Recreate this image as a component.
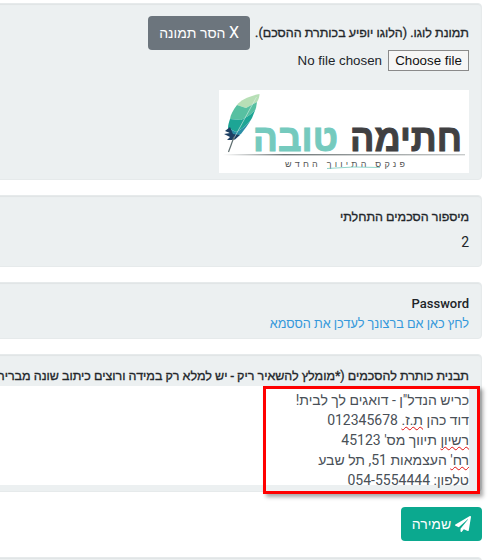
<div class="page" dir="rtl">
  <section class="card logo-card">
    <div class="logo-row">
      <span class="label">תמונת לוגו. (הלוגו יופיע בכותרת ההסכם).</span>
      <button class="remove-btn" type="button"><span class="x">X</span> הסר תמונה</button>
    </div>
    <div class="file">
      <button class="file-btn" type="button">Choose file</button>
      <span class="file-name">No file chosen</span>
    </div>
    <svg class="logo" width="250" height="83" viewBox="0 0 250 83">
      <rect width="250" height="83" fill="#fff" />
      <!-- feather -->
      <path d="M40.5 4 C30 6 22 10 18 15 L27 18 L38 12 C40 9 40.5 6 40.5 4Z" fill="#b7dfb6" />
      <path d="M18 15 C14 20 11.5 25 11 29 L22 30 C28 27 35 23 37 18 L38 12 L27 18Z" fill="#57c0a1" />
      <path d="M11 29 C10 32 9 35 9 38 L17 42 C24 39 30 33 33 28 L37 18 C35 23 28 27 22 30Z" fill="#1da595" />
      <path d="M9 38 C9 40 10 42 11 44 L15 48 L22 44 C25 40 29 35 33 28 C30 33 24 39 17 42Z" fill="#2b8fa6" />
      <path d="M11 37 L6 41 L11 43 L5 44 L11 47 L8 50 L13 50 L16 49.5 L21 45 L14 44Z" fill="#1d3f63" />
      <path d="M37.5 7 L14 50" stroke="#d8efe4" stroke-width="0.6" fill="none" />
      <path d="M15 47 L9.5 62" stroke="#5f6e70" stroke-width="1.2" fill="none" />
      <text class="logo-big" x="243" y="61" fill="#404042" stroke="#404042" textLength="112" lengthAdjust="spacingAndGlyphs">חתימה</text>
      <text class="logo-big" x="119" y="61" fill="#75cabe" stroke="#75cabe" textLength="85" lengthAdjust="spacingAndGlyphs">טובה</text>
      <defs>
        <linearGradient id="rule">
          <stop offset="0" stop-color="#fff" />
          <stop offset="0.25" stop-color="#6f7778" />
          <stop offset="1" stop-color="#c9cccc" />
        </linearGradient>
      </defs>
      <rect x="4" y="64" width="242" height="1.4" fill="url(#rule)" />
      <text class="logo-small" x="186" y="77" fill="#555" textLength="120">פנקס התיווך החדש</text>
      <path d="M108 78.5 Q135 76 161 77.5" stroke="#75cabe" stroke-width="0.8" fill="none" />
    </svg>
  </section>

  <section class="card number-card">
    <div class="label spaced">מיספור הסכמים התחלתי</div>
    <div class="value">2</div>
  </section>

  <section class="card password-card">
    <div class="label latin">Password</div>
    <a class="link" href="#password">לחץ כאן אם ברצונך לעדכן את הססמא</a>
  </section>

  <section class="card template-card">
    <div class="label nowrap">תבנית כותרת להסכמים (*מומלץ להשאיר ריק - יש למלא רק במידה ורוצים כיתוב שונה מברירת המחדל)</div>
    <div class="editor">
      <div>כריש הנדל"ן - דואגים לך לבית!</div>
      <div>דוד כהן <span class="typo">ת.ז.</span> 012345678</div>
      <div><span class="typo">רשיון</span> תיווך מס' 45123</div>
      <div><span class="typo">רח'</span> העצמאות 51, תל שבע</div>
      <div>טלפון: 054-5554444</div>
    </div>
  </section>

  <div class="actions">
    <button class="save-btn" type="button">
      <svg width="16" height="16" viewBox="0 0 512 512"><path fill="currentColor" d="M476 3.2L12.5 270.6c-18.1 10.4-15.8 35.6 2.2 43.2L121 358.4l287.3-253.2c5.5-4.9 13.3 2.6 8.6 8.3L176 407v80.5c0 23.6 28.5 32.9 42.5 15.8L282 426l124.6 52.2c14.2 6 30.4-2.9 33-18.2l72-432C515 7.8 493.3-6.8 476 3.2z" /></svg>
      שמירה
    </button>
  </div>

  <section class="card"></section>

  <div class="callout"></div>
</div>

<style>
  :global(body) {
    margin: 0;
    background: #fff;
  }

  .page {
    position: relative;
    width: 496px;
    height: 560px;
    overflow: hidden;
    box-sizing: border-box;
    padding: 3px 14px 0 0;
    font-family: Roboto, "Liberation Sans", Arial, sans-serif;
    font-size: 14px;
    line-height: 20px;
    color: #212529;
  }

  .card {
    margin: 0 0 15px -20px;
    padding: 11px 12px 6px;
    background: #ecf0f1;
    border: 1px solid #e6eaeb;
    border-radius: 4px;
    box-shadow: inset 0 1px 1px rgba(0, 0, 0, 0.05);
  }

  .logo-card {
    padding-top: 12px;
  }

  .label {
    display: block;
    font-size: 12.5px;
    font-weight: 400;
    -webkit-text-stroke: 0.3px #212529;
    color: #212529;
  }

  .latin {
    font-size: 13px;
    font-weight: 500;
    -webkit-text-stroke: 0;
  }

  .spaced {
    margin: 0 0 5px;
  }

  .nowrap {
    white-space: nowrap;
  }

  .logo-row {
    display: flex;
    align-items: center;
    gap: 5px;
  }

  .remove-btn {
    height: 34px;
    width: 102px;
    padding: 0;
    border: none;
    border-radius: 4px;
    background: #6c757d;
    color: #fff;
    font: inherit;
  }

  .x {
    font-size: 16px;
  }

  .file {
    display: flex;
    align-items: center;
    gap: 6px;
    margin: 0 0 19px;
    font-family: "Liberation Sans", sans-serif;
    font-size: 13.33px;
  }

  .file-btn {
    width: 81px;
    height: 21px;
    padding: 0;
    border: 1px solid #8a8a8a;
    background: #f6f6f6;
    color: #111;
    font: inherit;
  }

  .logo {
    display: block;
  }

  .logo-big {
    font-family: "Liberation Sans", sans-serif;
    font-weight: 700;
    font-size: 38px;
    stroke-width: 1;
    direction: rtl;
  }

  .logo-small {
    font-family: "Liberation Sans", sans-serif;
    font-size: 9px;
    direction: rtl;
  }

  .link {
    display: block;
    font-size: 12.7px;
    line-height: 19px;
    color: #3498db;
    text-decoration: none;
  }

  .number-card {
    height: 72px;
    box-sizing: border-box;
  }

  .password-card {
    height: 57px;
    box-sizing: border-box;
  }

  .template-card {
    height: 138px;
    box-sizing: border-box;
  }

  .editor {
    margin-left: -20px;
    padding: 4px 0 0;
    height: 99px;
    box-sizing: border-box;
    background: #fff;
    color: #495057;
  }

  .typo {
    text-decoration: underline wavy #e01010 1px;
    text-decoration-skip-ink: none;
  }

  .actions {
    display: flex;
    margin-bottom: 16px;
  }

  .save-btn {
    display: flex;
    align-items: center;
    justify-content: center;
    gap: 4px;
    width: 81px;
    height: 34px;
    padding: 0;
    border: none;
    border-radius: 4px;
    background: #0ba98f;
    color: #fff;
    font: inherit;
  }

  .callout {
    position: absolute;
    left: 263px;
    top: 386px;
    width: 217px;
    height: 108px;
    box-sizing: border-box;
    border: 3px solid #f00;
    box-shadow: 3px 3px 4px rgba(0, 0, 0, 0.35);
  }
</style>
